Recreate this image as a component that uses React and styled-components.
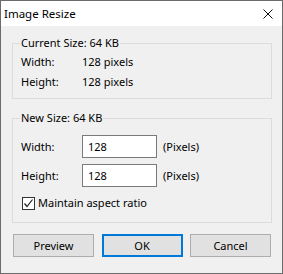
import React from 'react'
import styled, { createGlobalStyle } from 'styled-components'

const GlobalStyle = createGlobalStyle`
  html, body {
    margin: 0;
    padding: 0;
    background: #f0f0f0;
  }
  * {
    box-sizing: border-box;
  }
`

const FONT = `'Noto Sans', 'Liberation Sans', sans-serif`

const Window = styled.div`
  width: 283px;
  height: 274px;
  border: 1px solid #6b6b6b;
  background: #f0f0f0;
  font-family: ${FONT};
  font-size: 11px;
  color: #000;
  display: flex;
  flex-direction: column;
  overflow: hidden;
`

const TitleBar = styled.div`
  height: 25px;
  background: #fff;
  display: flex;
  align-items: center;
  justify-content: space-between;
  padding: 0 9px 0 3px;
  font-size: 11.5px;
`

const Body = styled.div`
  flex: 1;
  padding: 17px 10px 0 11px;
  display: flex;
  flex-direction: column;
`

const Group = styled.div`
  position: relative;
  border: 1px solid #dcdcdc;
  padding: ${p => p.$pad};
  margin-bottom: ${p => p.$mb}px;
  display: flex;
  flex-direction: column;
`

const Legend = styled.span`
  position: absolute;
  top: -9px;
  left: 7px;
  padding: 0 1px;
  background: #f0f0f0;
  line-height: 16px;
`

const InfoRow = styled.div`
  display: grid;
  grid-template-columns: 61px auto;
  line-height: 16px;
  margin-top: ${p => p.$mt || 0}px;
`

const FieldRow = styled.div`
  display: flex;
  align-items: center;
  margin-top: ${p => p.$mt || 0}px;
`

const FieldLabel = styled.span`
  width: 61px;
`

const Input = styled.div`
  width: 75px;
  height: 23px;
  border: 1px solid #7a7a7a;
  background: #fff;
  padding-left: 5px;
  display: flex;
  align-items: center;
  margin-right: 6px;
`

const CheckRow = styled.label`
  display: flex;
  align-items: center;
  line-height: 16px;
  margin-top: ${p => p.$mt}px;
  padding-left: 1px;
`

const Box = styled.span`
  width: 13px;
  height: 13px;
  border: 1px solid #333;
  background: #fff;
  display: flex;
  align-items: center;
  justify-content: center;
  margin-right: 3px;
`

const Buttons = styled.div`
  display: flex;
  justify-content: space-between;
  margin: 0 1px;
`

const Button = styled.div`
  width: 81px;
  height: 23px;
  background: #e1e1e1;
  border: ${p => (p.$primary ? '2px solid #0078d7' : '1px solid #adadad')};
  display: flex;
  align-items: center;
  justify-content: center;
`

export default function App() {
  return (
    <>
      <GlobalStyle />
      <Window>
        <TitleBar>
          <span>Image Resize</span>
          <svg width="10" height="10" viewBox="0 0 10 10">
            <path d="M0.5 0.5 L9.5 9.5 M9.5 0.5 L0.5 9.5" stroke="#111" strokeWidth="1" />
          </svg>
        </TitleBar>
        <Body>
          <Group $pad="10px 0 8px 8px" $mb={19}>
            <Legend>Current Size: 64 KB</Legend>
            <InfoRow>
              <span>Width:</span>
              <span>128 pixels</span>
            </InfoRow>
            <InfoRow $mt={4}>
              <span>Height:</span>
              <span>128 pixels</span>
            </InfoRow>
          </Group>
          <Group $pad="16px 0 11px 8px" $mb={11}>
            <Legend>New Size: 64 KB</Legend>
            <FieldRow>
              <FieldLabel>Width:</FieldLabel>
              <Input>128</Input>
              <span>(Pixels)</span>
            </FieldRow>
            <FieldRow $mt={6}>
              <FieldLabel>Height:</FieldLabel>
              <Input>128</Input>
              <span>(Pixels)</span>
            </FieldRow>
            <CheckRow $mt={8}>
              <Box>
                <svg width="11" height="11" viewBox="0 0 11 11">
                  <path d="M1.5 5.5 L4 8.5 L9.5 1.5" fill="none" stroke="#222" strokeWidth="1.2" />
                </svg>
              </Box>
              Maintain aspect ratio
            </CheckRow>
          </Group>
          <Buttons>
            <Button>Preview</Button>
            <Button $primary>OK</Button>
            <Button>Cancel</Button>
          </Buttons>
        </Body>
      </Window>
    </>
  )
}
